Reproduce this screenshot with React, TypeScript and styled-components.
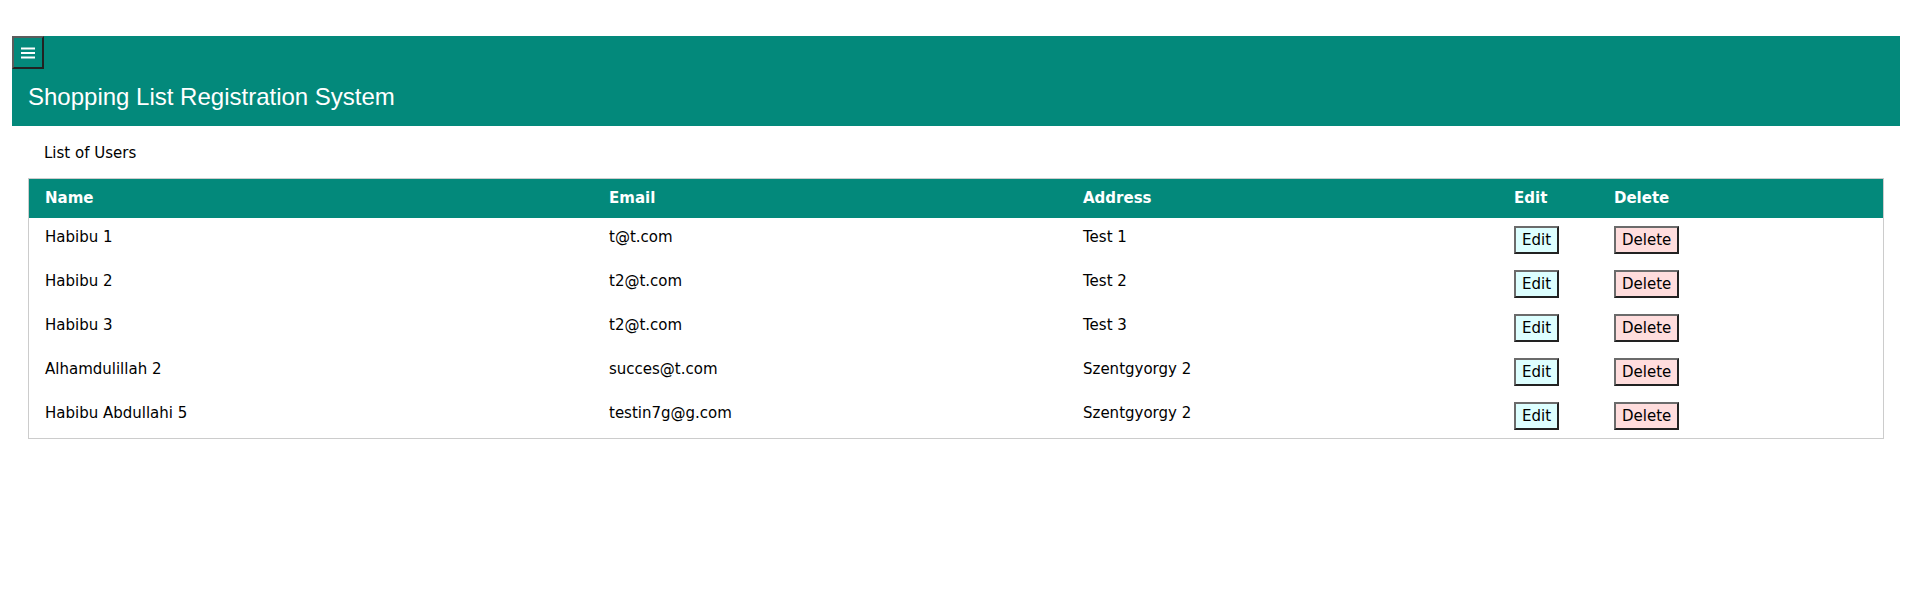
import styled, { createGlobalStyle } from "styled-components";

const GlobalStyle = createGlobalStyle`
  html, body {
    margin: 0;
    padding: 0;
    background: #fff;
  }
  body {
    font-family: "DejaVu Sans", Verdana, sans-serif;
    font-size: 15px;
    line-height: 1.5;
    color: #000;
  }
`;

const Page = styled.div`
  padding: 36px 16px 0 12px;
`;

const TopBar = styled.header`
  display: flow-root;
  background-color: #03897b;
  color: #fff;
`;

const MenuButton = styled.button`
  display: flex;
  align-items: center;
  justify-content: center;
  width: 32px;
  height: 33px;
  padding: 0;
  margin: 0;
  background-color: #03897b;
  border: 2px solid;
  border-color: #5c5c5c #222 #222 #5c5c5c;
  cursor: pointer;
`;

const Title = styled.h3`
  margin: 10px 16px 11px;
  font-family: "Liberation Sans", Arial, sans-serif;
  font-size: 24px;
  font-weight: 400;
  line-height: 36px;
`;

const Content = styled.main`
  padding: 0 16px;
`;

const Caption = styled.p`
  margin: 16px 0 13.5px 16px;
`;

const Table = styled.table`
  width: 100%;
  table-layout: fixed;
  border-collapse: separate;
  border-spacing: 0;
  border: 1px solid #ccc;
  box-sizing: border-box;
`;

const HeadRow = styled.tr`
  background-color: #03897b;
  color: #fff;
`;

const Th = styled.th`
  padding: 8px 8px;
  text-align: left;
  vertical-align: top;
  font-weight: 700;
  &:first-child {
    padding-left: 16px;
  }
`;

const Td = styled.td`
  padding: 8px 8px;
  text-align: left;
  vertical-align: top;
  &:first-child {
    padding-left: 16px;
  }
`;

const ActionButton = styled.button<{ $tone: "edit" | "delete" }>`
  font: inherit;
  line-height: 22px;
  vertical-align: top;
  color: #000;
  margin: 0;
  padding: 1px 6px;
  border: 2px solid;
  border-color: #6b6b6b #222 #222 #6b6b6b;
  background-color: ${({ $tone }) => ($tone === "edit" ? "#ddffff" : "#ffdddd")};
  cursor: pointer;
`;

const users = [
  { name: "Habibu 1", email: "t@t.com", address: "Test 1" },
  { name: "Habibu 2", email: "t2@t.com", address: "Test 2" },
  { name: "Habibu 3", email: "t2@t.com", address: "Test 3" },
  { name: "Alhamdulillah 2", email: "succes@t.com", address: "Szentgyorgy 2" },
  { name: "Habibu Abdullahi 5", email: "testin7g@g.com", address: "Szentgyorgy 2" },
];

function App() {
  return (
    <>
      <GlobalStyle />
      <Page>
        <TopBar>
          <MenuButton aria-label="menu">
            <svg width="14" height="12" viewBox="0 0 14 12">
              <rect x="0" y="0.5" width="14" height="2" fill="#fff" />
              <rect x="0" y="5" width="14" height="2" fill="#fff" />
              <rect x="0" y="9.5" width="14" height="2" fill="#fff" />
            </svg>
          </MenuButton>
          <Title>Shopping List Registration System</Title>
        </TopBar>
        <Content>
          <Caption>List of Users</Caption>
          <Table>
            <colgroup>
              <col style={{ width: 572 }} />
              <col style={{ width: 474 }} />
              <col style={{ width: 431 }} />
              <col style={{ width: 100 }} />
              <col />
            </colgroup>
            <thead>
              <HeadRow>
                <Th>Name</Th>
                <Th>Email</Th>
                <Th>Address</Th>
                <Th>Edit</Th>
                <Th>Delete</Th>
              </HeadRow>
            </thead>
            <tbody>
              {users.map((u, i) => (
                <tr key={i}>
                  <Td>{u.name}</Td>
                  <Td>{u.email}</Td>
                  <Td>{u.address}</Td>
                  <Td>
                    <ActionButton $tone="edit">Edit</ActionButton>
                  </Td>
                  <Td>
                    <ActionButton $tone="delete">Delete</ActionButton>
                  </Td>
                </tr>
              ))}
            </tbody>
          </Table>
        </Content>
      </Page>
    </>
  );
}

export default App;
